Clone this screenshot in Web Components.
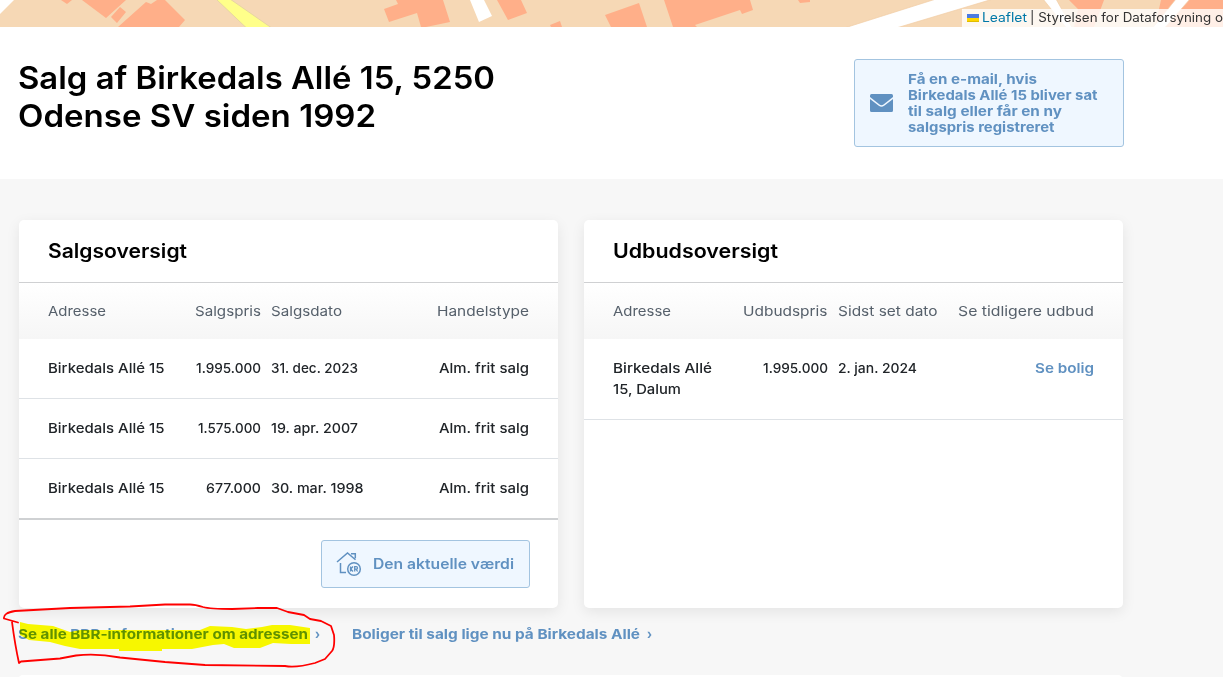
<!DOCTYPE html>
<html lang="da"><head><meta charset="utf-8"><title>Salg af Birkedals Allé 15</title>
<style>
html,body{margin:0;height:677px;overflow:hidden;background:#f7f7f7}
body{font-family:Inter,"Open Sans",sans-serif;color:#212529}
</style></head><body>
<sale-page></sale-page>
<script>
const define=(name,html,after)=>customElements.define(name,class extends HTMLElement{
  connectedCallback(){
    if(this.shadowRoot)return;
    const r=this.attachShadow({mode:'open'});
    r.innerHTML=html;
    if(after)after.call(this,r);
  }
});

/* A single line of text stretched horizontally to the width given in "w". */
define('text-line',`<style>
:host{display:block;white-space:nowrap;flex:none}
span{display:inline-block;transform-origin:0 50%}
</style><span><slot></slot></span>`,function(r){
  const s=r.querySelector('span'),w=+this.getAttribute('w');
  this.style.width=w+'px';
  s.style.transform='scaleX('+(w/s.getBoundingClientRect().width)+')';
});

define('map-strip',`<style>
:host{display:block;position:relative;height:27px;overflow:hidden;background:#f6d8b5}
svg.map{display:block;width:1223px;height:27px}
.credit{position:absolute;left:962px;top:9px;width:261px;height:18px;box-sizing:border-box;padding-left:5px;background:rgba(255,255,255,.8);display:flex;align-items:center;gap:3px;font-size:12.5px;line-height:18px;color:#333}
.credit svg{flex:none}
a{color:#0078a8}
</style>
<svg class="map" viewBox="0 0 1223 27">
<path fill="#fff" d="M0 0H14L0 14Z"/>
<g fill="#ffaf89">
<path d="M61 0L67 4L72 0ZM82 0L106 18L126 0ZM111 17L120 7L126 12L117 23ZM118 27L146 2L151 4L157 0H165L185 20L179 27Z"/>
<path d="M384 9L398 4L396 0H443L450 22L426 27H421L417 13L389 22Z"/>
<path d="M497 0H521L527 13L508 20ZM550 25L560 21L562 27H551ZM605 15L639 3L647 27H611ZM664 0H750L753 10L742 14L740 10L695 25L697 27H673ZM798 0H810V2L800 3Z"/>
<path d="M1069 0H1104L1094 27H1074L1078 9ZM1161 0H1223V27H1155Z"/></g>
<path fill="#ffff8a" stroke="#e6d6a0" d="M216 -1H230L271 27.500H246Z"/>
<path fill="#fff" d="M470 0H484L492 16L479 22Z"/>
<g fill="#fff" stroke="#f0cda5" stroke-width=".7">
<path d="M846 27.500L936 -1H993L898 27.500Z"/><path d="M1043 -1H1056L1072 27.500H1066Z"/><path d="M1176 -1H1190L1165 27.500H1153Z"/></g>
</svg>
<div class="credit"><svg width="12" height="8"><path fill="#4c7be1" d="M0 0h12v4H0z"/><path fill="#ffd500" d="M0 4h12v3H0z"/><path fill="#e0bc00" d="M0 7h12v1H0z"/></svg>
<a><text-line w="45">Leaflet</text-line></a><text-line w="193">| Styrelsen for Dataforsyning o</text-line></div>`);

define('outline-button',`<style>
:host{display:flex;align-items:center;box-sizing:border-box;border:1px solid #a3c4e0;border-radius:3px;background:#eff7ff;color:#6091c1}
</style><slot></slot>`);

define('page-header',`<style>
:host{display:flex;justify-content:space-between;align-items:flex-start;box-sizing:border-box;height:152px;padding:32px 99px 0 18px;background:#fff}
h1{margin:0;font-size:31px;line-height:38px;font-weight:560;color:#000}
outline-button{width:270px;height:88px;padding:0 0 0 15px;gap:15px;font-size:13.500px;line-height:16px;font-weight:660}
</style>
<h1><text-line w="477">Salg af Birkedals Allé 15, 5250</text-line><text-line w="358">Odense SV siden 1992</text-line></h1>
<outline-button><svg width="23" height="18" viewBox="0 0 23 18"><path fill="#6091c1" d="M1.500 0h20Q23 0 23 1.500V3L13.500 10.500Q11.500 12 9.500 10.500L0 3V1.500Q0 0 1.500 0Z"/><path fill="#6091c1" d="M0 5L8.800 11.800Q11.500 13.800 14.200 11.800L23 5V16.500Q23 18 21.500 18H1.500Q0 18 0 16.500Z"/></svg>
<div><text-line w="129">Få en e-mail, hvis</text-line><text-line w="189.5">Birkedals Allé 15 bliver sat</text-line><text-line w="154">til salg eller får en ny</text-line><text-line w="146.5">salgspris registreret</text-line></div></outline-button>`);

define('data-card',`<style>
:host{display:flex;flex-direction:column;width:539.5px;height:388px;border-radius:5px;background:#fff;box-shadow:0 4px 14px rgba(0,0,0,.08)}
header{box-sizing:border-box;padding:0 30px 0 29.5px;border-bottom:1px solid #cfd0d2;display:flex;align-items:center;height:63px;font-size:19.500px;font-weight:560;color:#000}
</style><header><slot name="title"></slot></header><slot></slot>`);

define('data-row',`<style>
:host{display:grid;grid-template-columns:var(--cols);column-gap:10px;box-sizing:border-box;height:60px;padding:19px 29.5px 0 29.5px;border-bottom:1px solid #dee2e6;font-size:13.500px;line-height:21px;font-weight:460;align-items:start}
:host([head]){height:56px;padding-top:18px;border:0;background:linear-gradient(#fff,#f6f6f6);color:#56606b;font-weight:400}
:host([tall]){height:81px}
:host([last]){border-bottom:2px solid #cfd1d3;height:61px}
::slotted([end]){justify-self:end}
</style><slot></slot>`);

define('marker-highlight',`<style>
:host{position:absolute;left:0;top:600px;pointer-events:none;mix-blend-mode:multiply}
svg{display:block}
</style><svg width="350" height="77" viewBox="0 600 350 77">
<path fill="#ff0" d="M20 622L28 624L53 626L70 632L80 630H200L210 626L232 627L246 629L262 627L272 625H290L310 628V644H291L273 643L260 648H234L224 644L213 645L192 649H162V651H119V649H80L65 646L50 642L29 640L20 635Z"/>
</svg>`);

define('marker-outline',`<style>
:host{position:absolute;left:0;top:600px;pointer-events:none}
svg{display:block}
</style><svg width="350" height="77" viewBox="0 600 350 77">
<path fill="none" stroke="#f00" stroke-width="1.800" stroke-linejoin="round" stroke-linecap="round" d="M18 622.500L4 618.500Q3 613 15 611L70 608L130 606.500L165 604.500H190Q195 604.500 203 607Q210 609 232 609L258 608H277L288 612L304 615L310 619L321 621L331 626L334 635Q335 647 332 651L325 659L315 663Q296 668 285 666L205 665L165 662L120 657.500Q96 653 76 655.500L60 658.500L21 661.500L19 663Q15 645 12 622"/>
</svg>`);

define('sale-page',`<style>
:host{display:block;position:relative;width:1223px;height:677px;overflow:hidden}
.cards{display:flex;gap:25.500px;padding:41px 0 0 18.500px}
.sold{--cols:116.5px 86px 90px 1fr}
.offered{--cols:116.5px 88px 100px 1fr}
.link{color:#6091c1;font-weight:600}
.action{display:flex;justify-content:flex-end;padding:20px 28.500px 0}
.action outline-button{box-sizing:border-box;width:209px;height:48px;padding:0 0 2px 14px;gap:11px;font-size:14px;font-weight:560}
.action svg{margin-top:2px}
nav{display:flex;gap:32px;padding:15px 0 0 18px;font-size:13.500px;line-height:22px;font-weight:660;color:#6091c1}
nav div{display:flex;gap:7px}
.next{width:1105px;height:10px;margin:30px 0 0 18px;border-radius:5px 5px 0 0;background:#fff}
</style>
<map-strip></map-strip>
<page-header></page-header>
<div class="cards">
<data-card class="sold"><text-line slot="title" w="139">Salgsoversigt</text-line>
<data-row head><text-line w="58">Adresse</text-line><text-line end w="66">Salgspris</text-line><text-line w="71">Salgsdato</text-line><text-line end w="92">Handelstype</text-line></data-row>
<data-row><text-line w="116.5">Birkedals Allé 15</text-line><text-line end w="65">1.995.000</text-line><text-line w="87">31. dec. 2023</text-line><text-line end w="90">Alm. frit salg</text-line></data-row>
<data-row><text-line w="116.5">Birkedals Allé 15</text-line><text-line end w="63">1.575.000</text-line><text-line w="87">19. apr. 2007</text-line><text-line end w="90">Alm. frit salg</text-line></data-row>
<data-row last><text-line w="116.5">Birkedals Allé 15</text-line><text-line end w="55">677.000</text-line><text-line w="92.5">30. mar. 1998</text-line><text-line end w="90">Alm. frit salg</text-line></data-row>
<div class="action"><outline-button>
<svg width="26" height="26" viewBox="0 0 26 26" fill="none" stroke="#6091c1" stroke-width="1.500"><path d="M1 11L11.500 2L19.500 8.800M15 2.700H19.300V7.300M4.500 12V21.500H10"/><circle cx="18" cy="18" r="6.300"/><path stroke-width="1.300" d="M14.500 15.500V20.500M17 15.500L14.700 18L17 20.500M18.700 20.500V15.700H20.200Q21.500 15.700 21.500 17Q21.500 18.200 20.200 18.200H18.700M20 18.200L21.600 20.500"/></svg>
<text-line w="141">Den aktuelle værdi</text-line></outline-button></div>
</data-card>
<data-card class="offered"><text-line slot="title" w="165">Udbudsoversigt</text-line>
<data-row head><text-line w="58">Adresse</text-line><text-line end w="84.5">Udbudspris</text-line><text-line w="99.5">Sidst set dato</text-line><text-line end w="136">Se tidligere udbud</text-line></data-row>
<data-row tall><div><text-line w="99">Birkedals Allé</text-line><text-line w="68">15, Dalum</text-line></div><text-line end w="65">1.995.000</text-line><text-line w="79">2. jan. 2024</text-line><text-line class="link" end w="59">Se bolig</text-line></data-row>
</data-card>
</div>
<nav><div><text-line w="290">Se alle BBR-informationer om adressen</text-line><text-line w="5">›</text-line></div><div><text-line w="288">Boliger til salg lige nu på Birkedals Allé</text-line><text-line w="5">›</text-line></div></nav>
<div class="next"></div>
<marker-highlight></marker-highlight><marker-outline></marker-outline>`);
</script></body></html>
